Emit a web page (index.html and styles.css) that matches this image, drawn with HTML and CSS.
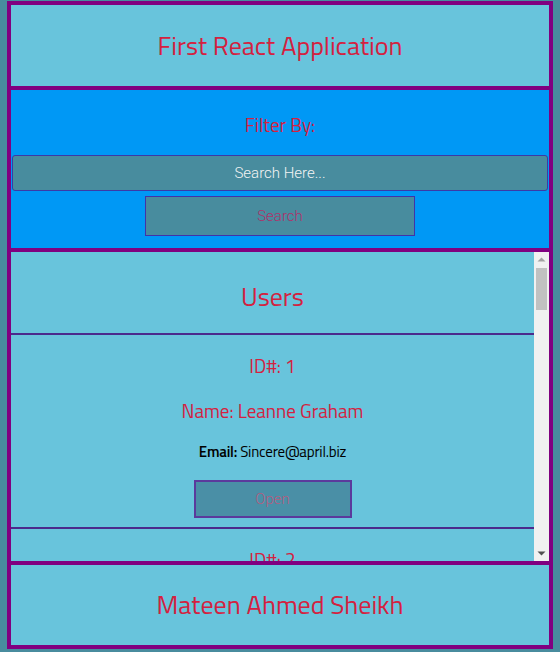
FILE: index.html
```html
<!DOCTYPE html>
<html>
<head>
<meta charset="utf-8">
<link rel="stylesheet" href="styles.css">
</head>
<body>
<div class="app">
  <header class="header"><h1 class="title">First React Application</h1></header>
  <section class="filter">
    <h3 class="filter-title">Filter By:</h3>
    <input class="search-input" type="text" placeholder="Search Here...">
    <button class="search-btn">Search</button>
  </section>
  <section class="users">
    <div class="users-list">
      <div class="users-head"><h2 class="users-title">Users</h2></div>
      <div class="card"><p class="uid">ID#: 1</p><p class="uname">Name: Leanne Graham</p><p class="uemail"><b>Email:</b> Sincere@april.biz</p><button class="open-btn">Open</button></div>
      <div class="card"><p class="uid">ID#: 2</p><p class="uname">Name: Ervin Howell</p><p class="uemail"><b>Email:</b> Shanna@melissa.tv</p><button class="open-btn">Open</button></div>
      <div class="card"><p class="uid">ID#: 3</p><p class="uname">Name: Clementine Bauch</p><p class="uemail"><b>Email:</b> Nathan@yesenia.net</p><button class="open-btn">Open</button></div>
    </div>
    <div class="scrollbar" aria-hidden="true">
      <div class="sb-btn"><svg width="15" height="15" viewBox="0 0 15 15"><path d="M3.5 9.5 L7.5 5.5 L11.5 9.5 Z" fill="#a3a3a3"/></svg></div>
      <div class="sb-thumb"></div>
      <div class="sb-space"></div>
      <div class="sb-btn"><svg width="15" height="15" viewBox="0 0 15 15"><path d="M3.5 5.5 L7.5 9.5 L11.5 5.5 Z" fill="#505050"/></svg></div>
    </div>
  </section>
  <footer class="footer"><h1 class="title">Mateen Ahmed Sheikh</h1></footer>
</div>
</body>
</html>
```
FILE: styles.css
```css
html, body {
  margin: 0;
  padding: 0;
  background: #488c9e;
}
body {
  font-family: "Titillium Web", "DejaVu Sans Condensed", "Noto Sans", sans-serif;
}
.app {
  margin: 1px 7px 3px 7px;
  border: 4px solid #800080;
  display: flex;
  flex-direction: column;
}
.header, .footer {
  background: #68c4dc;
  display: flex;
  align-items: center;
  justify-content: center;
}
.header {
  height: 81px;
  border-bottom: 4px solid #800080;
}
.footer {
  height: 80px;
}
.title {
  margin: 0;
  font-size: 26px;
  font-weight: normal;
  color: #d4213f;
  line-height: 30px;
}
.filter {
  background: #0098f5;
  border-bottom: 4px solid #800080;
  display: flex;
  flex-direction: column;
  align-items: center;
  padding: 24px 1px 12px;
}
.filter-title {
  margin: 0 0 19px;
  line-height: 22px;
  font-size: 19px;
  font-weight: normal;
  color: #d4213f;
}
.search-input {
  box-sizing: border-box;
  width: 100%;
  height: 36px;
  margin: 0;
  background: #488c9e;
  border: 1px solid #3b3aa6;
  border-radius: 3px;
  text-align: center;
  font-family: "Roboto", "Noto Sans", sans-serif;
  font-weight: 300;
  font-size: 15px;
  color: #fff;
  outline: none;
}
.search-input::placeholder {
  color: #f4f4f4;
}
.search-btn {
  box-sizing: border-box;
  margin-top: 5px;
  width: 270px;
  height: 40px;
  background: #488c9e;
  border: 1px solid #4133a8;
  font-family: "Roboto", "Noto Sans", sans-serif;
  font-weight: 300;
  font-size: 15px;
  color: #b0306a;
}
.users {
  height: 309px;
  display: flex;
  background: #68c4dc;
  border-bottom: 4px solid #800080;
  overflow: hidden;
}
.users-list {
  flex: 1;
  min-width: 0;
  overflow: hidden;
}
.scrollbar {
  width: 15px;
  flex: none;
  background: #f1f1f1;
  display: flex;
  flex-direction: column;
}
.sb-btn {
  height: 15px;
  flex: none;
}
.sb-btn svg {
  display: block;
}
.sb-thumb {
  height: 42px;
  margin: 1px 2px 0;
  background: #c1c1c1;
  flex: none;
}
.sb-space {
  flex: 1;
}
.users-head {
  height: 81px;
  border-bottom: 2px solid #4b2a8c;
  display: flex;
  justify-content: center;
}
.users-title {
  margin: 30px 0 0;
  line-height: 30px;
  font-size: 26px;
  font-weight: normal;
  color: #d4213f;
}
.card {
  display: flex;
  flex-direction: column;
  align-items: center;
  padding: 19px 0 9px;
  border-bottom: 2px solid #4b2a8c;
}
.card p {
  margin: 0;
}
.uid, .uname {
  line-height: 24px;
  font-size: 19px;
  color: #d4213f;
}
.uid {
  margin-bottom: 21px !important;
}
.uname {
  margin-bottom: 19px !important;
}
.uemail {
  line-height: 20px;
  font-size: 15px;
  color: #000;
  margin-bottom: 18px !important;
  letter-spacing: -0.2px;
}
.uemail b {
  font-weight: 600;
}
.open-btn {
  box-sizing: border-box;
  width: 158px;
  height: 38px;
  background: #4a8fa6;
  border: 2px solid #5b3a9c;
  font-family: "Roboto", "Noto Sans", sans-serif;
  font-weight: 300;
  font-size: 15px;
  color: #b45c80;
}
```
